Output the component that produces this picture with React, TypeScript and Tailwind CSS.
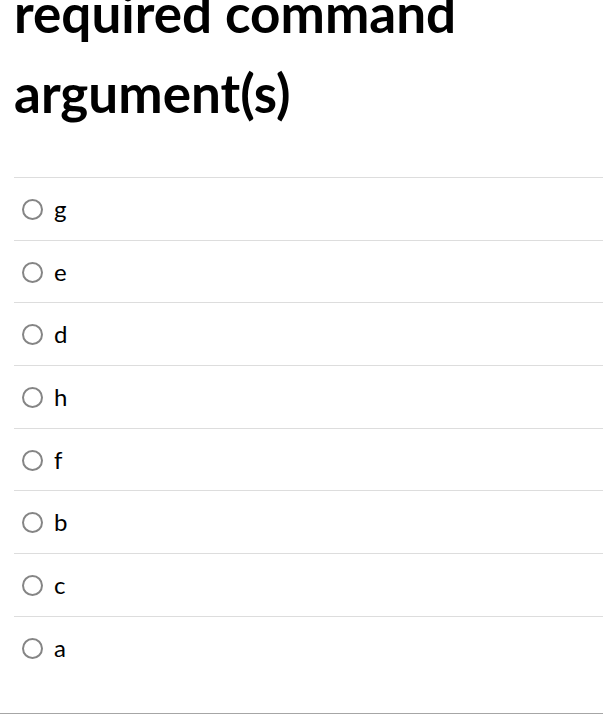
import React from 'react';

const options = ['g', 'e', 'd', 'h', 'f', 'b', 'c', 'a'];

export default function App() {
  return (
    <div className="h-[715px] overflow-hidden bg-white font-['Lato','Liberation_Sans',sans-serif] text-black">
      <div className="border-b border-[#a6a6a6]">
        <h1 className="mt-[-27px] pl-[14px] text-[53px] font-bold leading-[80px]">
          required command argument(s)
        </h1>

        <div className="ml-[14px] mt-[44px] pb-[34px]">
          {options.map((o) => (
            <label
              key={o}
              className="flex h-[62.7px] items-center border-t border-[#dddddd] pl-[8px]"
            >
              <span className="mt-[1px] h-[21px] w-[21px] shrink-0 rounded-full border-2 border-[#858585] bg-white" />
              <span className="ml-[11px] text-[24px] leading-none">{o}</span>
            </label>
          ))}
        </div>
      </div>
    </div>
  );
}
